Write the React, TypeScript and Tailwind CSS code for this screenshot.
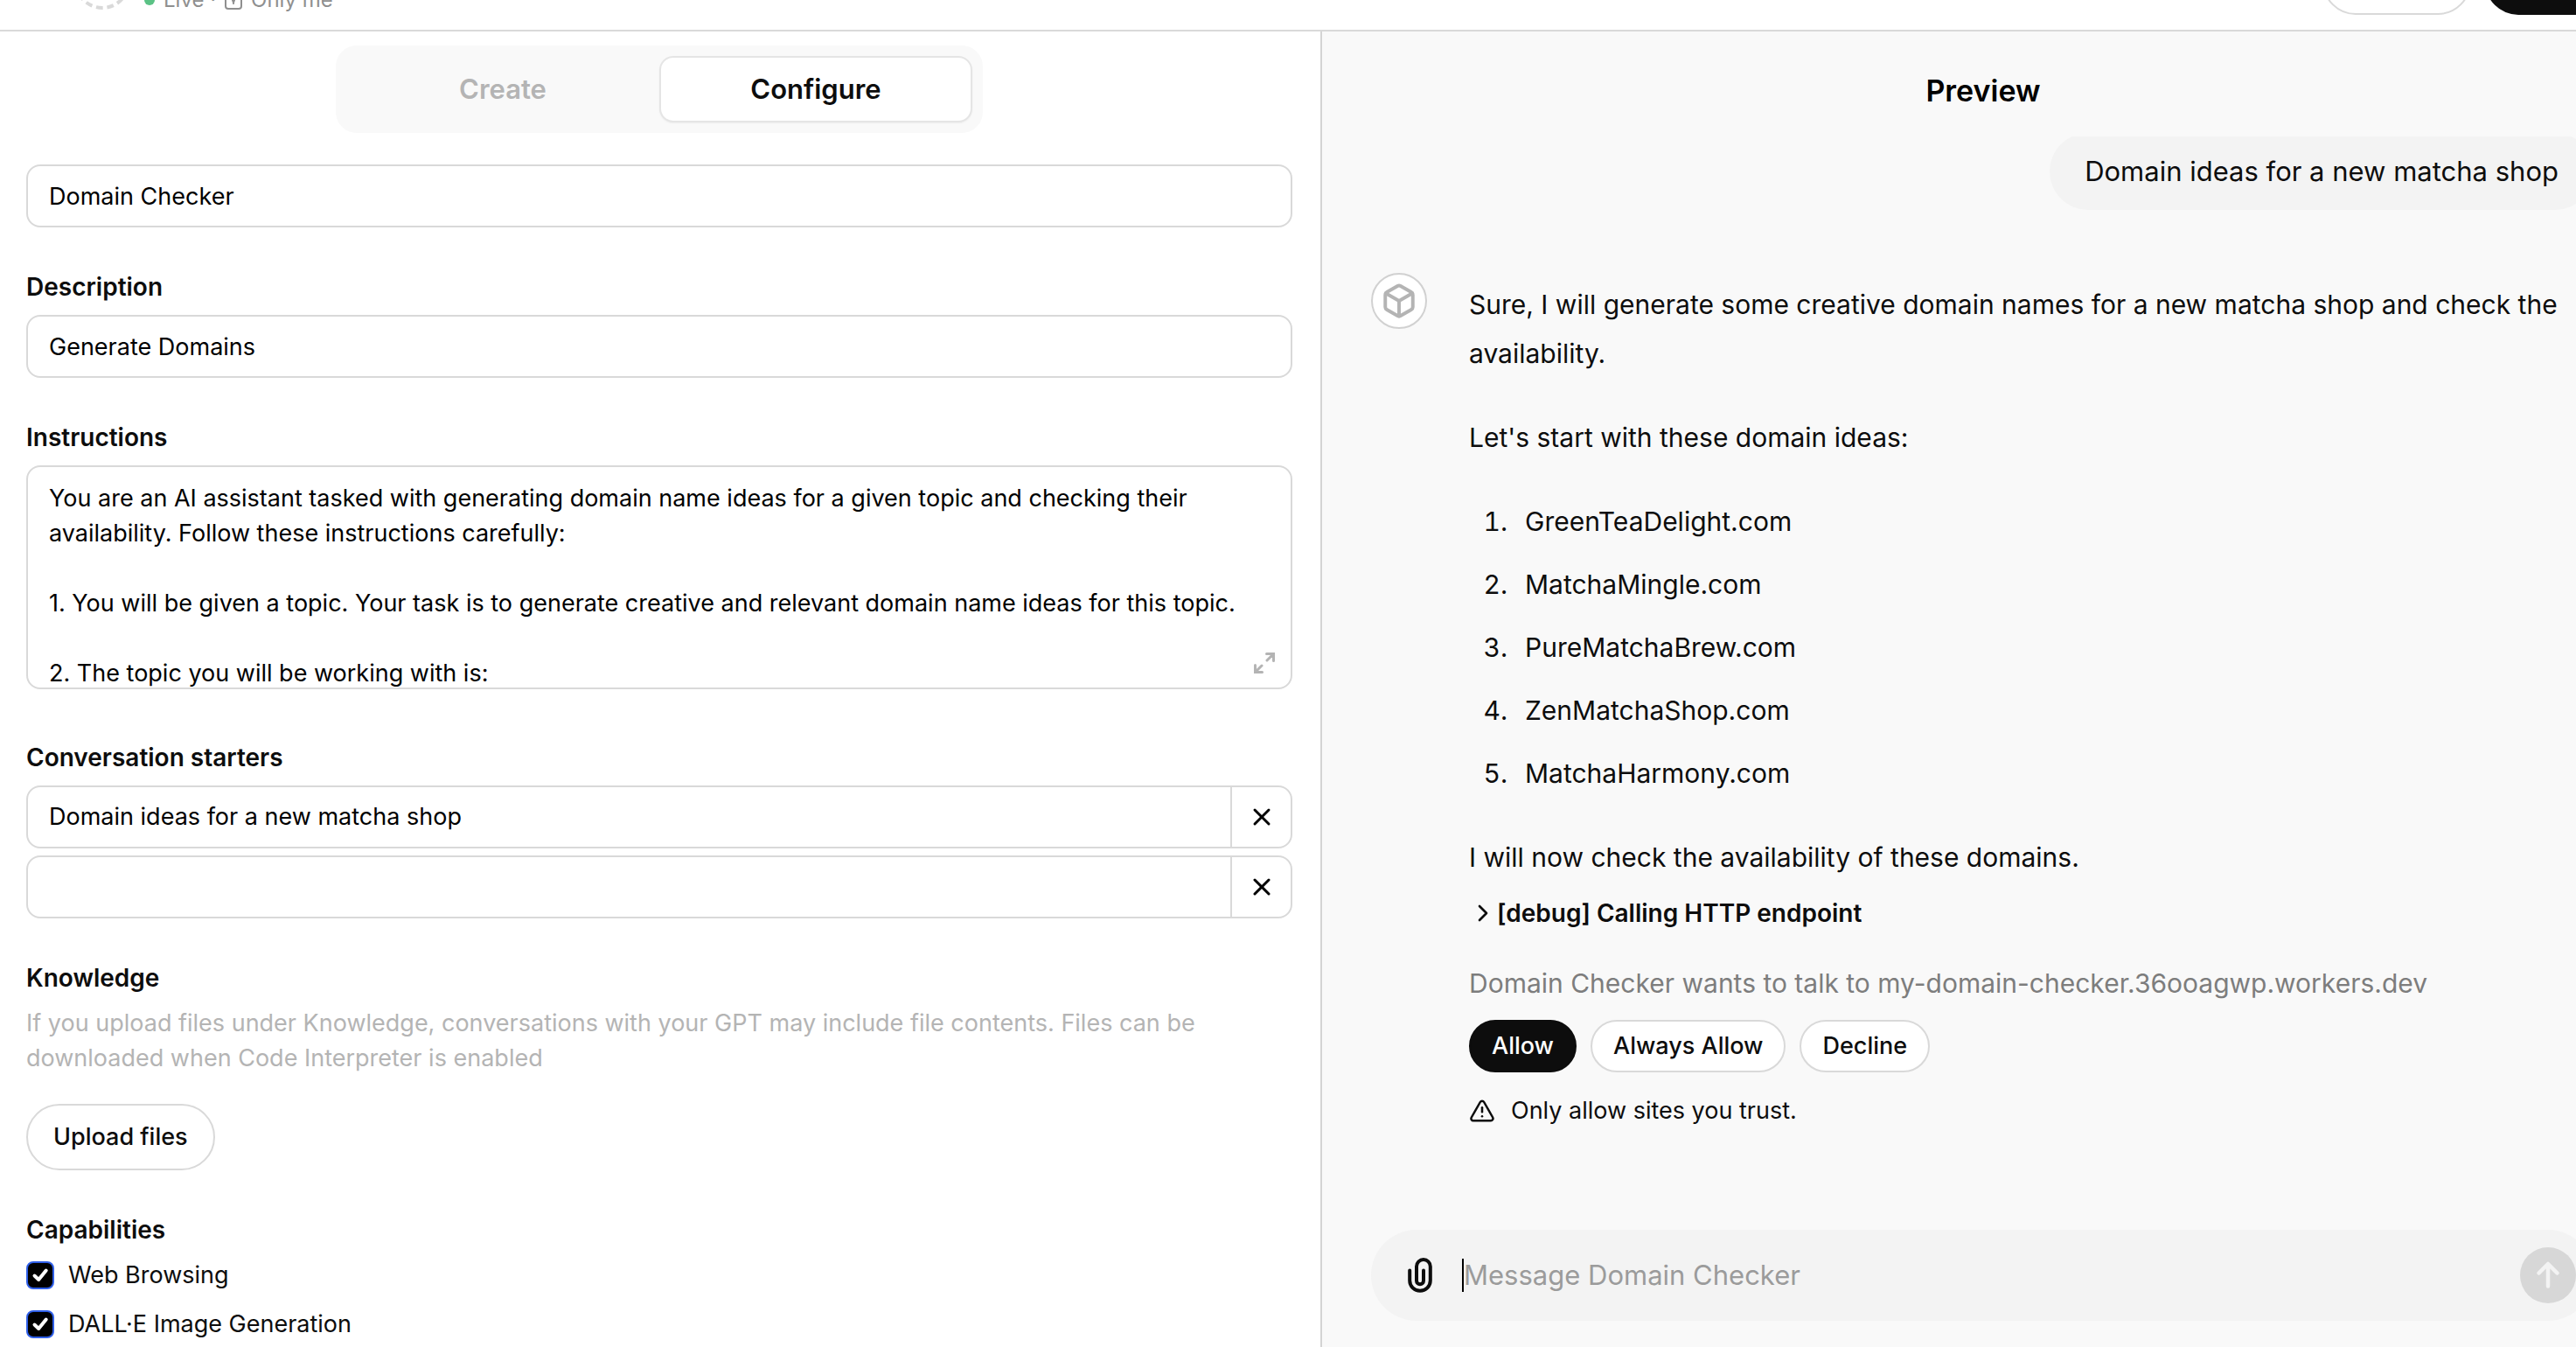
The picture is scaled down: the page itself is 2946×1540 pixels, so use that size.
import { Box, ChevronRight, TriangleAlert, X } from "lucide-react";
import type { ReactNode } from "react";

const instructions = `You are an AI assistant tasked with generating domain name ideas for a given topic and checking their availability. Follow these instructions carefully:

1. You will be given a topic. Your task is to generate creative and relevant domain name ideas for this topic.

2. The topic you will be working with is:`;

const domains = [
  "GreenTeaDelight.com",
  "MatchaMingle.com",
  "PureMatchaBrew.com",
  "ZenMatchaShop.com",
  "MatchaHarmony.com",
];

const starters = ["Domain ideas for a new matcha shop", ""];
const capabilities = ["Web Browsing", "DALL·E Image Generation"];

function LockIcon() {
  return (
    <svg width="20" height="28" viewBox="0 0 20 28" fill="none" stroke="currentColor" strokeWidth="2">
      <path d="M5 8V6a5 5 0 0 1 10 0v2" />
      <rect x="1" y="8" width="18" height="16" rx="3" />
      <path d="M10 19l-1.5-5h3z" fill="currentColor" strokeWidth="1" strokeLinejoin="round" />
    </svg>
  );
}

function ExpandIcon() {
  return (
    <svg width="24" height="24" viewBox="0 0 24 24" fill="none" stroke="currentColor" strokeWidth="3" strokeLinecap="round">
      <path d="M14.5 1.5h8v8M22 2l-7 7" />
      <path d="M9.5 22.5h-8v-8M2 22l7-7" />
    </svg>
  );
}

function PaperclipIcon() {
  return (
    <svg width="28" height="40" viewBox="0 0 28 40" fill="none" stroke="currentColor" strokeWidth="4" strokeLinecap="round">
      <path d="M2.2 14.5V26a11.8 11.8 0 0 0 23.6 0V10a7.9 7.9 0 0 0-15.8 0v16.300a4 4 0 0 0 8 0V14.5" />
    </svg>
  );
}

function SendIcon() {
  return (
    <svg width="64" height="64" viewBox="0 0 64 64" fill="none" stroke="currentColor" strokeWidth="4.5" strokeLinecap="round" strokeLinejoin="round">
      <path d="M21.500 29.500L32 19l10.500 10.500M32 20v24.500" />
    </svg>
  );
}

function Label({ htmlFor, children }: { htmlFor: string; children: ReactNode }) {
  return (
    <label htmlFor={htmlFor} className="block text-[28px] leading-10 font-semibold">
      {children}
    </label>
  );
}

function Field({ id, value }: { id: string; value: string }) {
  return (
    <input
      id={id}
      aria-label={id}
      defaultValue={value}
      className="block h-[72px] w-full rounded-2xl border-2 border-[#d9d9d9] bg-white px-6 text-[27px] leading-10 text-black outline-none"
    />
  );
}

function Header() {
  return (
    <header className="flex h-9 shrink-0 items-end justify-between border-b-2 border-[#d9d9d9] bg-white pr-8 pl-[85px]">
      <div className="flex items-end gap-4">
        <svg className="mb-[23px]" width="64" height="64" viewBox="0 0 64 64" fill="none">
          <circle cx="32" cy="32" r="30" stroke="#d9d9d9" strokeWidth="4" strokeDasharray="7.800 4.766" strokeDashoffset="3.900" />
        </svg>
        <div className="mb-[18px] flex items-center gap-2.5 text-2xl leading-8 text-[#8f8f8f]">
          <span className="size-3 rounded-full bg-[#5bc285]" />
          <span>Live ·</span>
          <LockIcon />
          <span>Only me</span>
        </div>
      </div>
      <div className="mb-[17px] flex gap-4">
        <button aria-label="Share" className="h-[76px] w-[170px] rounded-full border-2 border-[#d9d9d9] bg-white" />
        <button aria-label="Update" className="h-[76px] w-[150px] rounded-full bg-[#0d0d0d]" />
      </div>
    </header>
  );
}

function ConfigurePanel() {
  return (
    <section className="overflow-hidden border-r-2 border-[#d4d4d4] bg-white pr-8 pl-[30px]">
      <div className="mx-auto mt-4 flex w-[740px] rounded-3xl bg-[#f9f9f9] p-3 text-[31px] leading-10 font-semibold">
        <button className="h-[76px] w-1/2 rounded-2xl text-[#b4b4b4]">Create</button>
        <button className="h-[76px] w-1/2 rounded-2xl border-2 border-[#e5e5e5] bg-white text-[#0d0d0d] shadow-xs">Configure</button>
      </div>

      <form className="mt-9 flex flex-col gap-12">
        <Field id="Name" value="Domain Checker" />

        <div className="flex flex-col gap-3">
          <Label htmlFor="Description">Description</Label>
          <Field id="Description" value="Generate Domains" />
        </div>

        <div className="flex flex-col gap-3 pb-[10px]">
          <Label htmlFor="Instructions">Instructions</Label>
          <div className="relative">
            <textarea
              id="Instructions"
              defaultValue={instructions}
              className="block h-64 w-full resize-none overflow-hidden rounded-2xl border-2 border-[#d9d9d9] px-6 pt-4 text-[27px] leading-10 text-black outline-none"
            />
            <button type="button" aria-label="Expand" className="absolute right-5 bottom-[18px] text-[#b4b4b4]">
              <ExpandIcon />
            </button>
          </div>
        </div>

        <div className="flex flex-col gap-3">
          <Label htmlFor="starter-0">Conversation starters</Label>
          <div className="flex flex-col gap-2">
            {starters.map((text, i) => (
              <div key={i} className="flex h-[72px] overflow-hidden rounded-2xl border-2 border-[#d9d9d9] bg-white">
                <input
                  id={`starter-${i}`}
                  aria-label={`Conversation starter ${i + 1}`}
                  defaultValue={text}
                  className="min-w-0 flex-1 px-6 text-[27px] leading-10 text-black outline-none"
                />
                <button type="button" aria-label="Remove" className="flex w-[69px] items-center justify-center border-l-2 border-[#d9d9d9] text-black">
                  <X size={32} strokeWidth={2.25} />
                </button>
              </div>
            ))}
          </div>
        </div>

        <div>
          <Label htmlFor="upload">Knowledge</Label>
          <p className="mt-3 text-[27px] leading-10 text-[#b4b4b4]">
            If you upload files under Knowledge, conversations with your GPT may include file contents. Files can be downloaded when Code Interpreter is enabled
          </p>
          <button id="upload" type="button" className="mt-8 h-[76px] rounded-full border-2 border-[#d9d9d9] px-[29px] text-[27px] leading-10 font-medium">
            Upload files
          </button>
        </div>

        <fieldset>
          <legend className="text-[28px] leading-10 font-semibold">Capabilities</legend>
          <div className="mt-3 flex flex-col gap-4">
            {capabilities.map((name) => (
              <label key={name} className="flex items-center gap-4 text-[27px] leading-10">
                <span className="grid size-8">
                  <input
                    type="checkbox"
                    defaultChecked
                    className="col-start-1 row-start-1 size-8 appearance-none rounded-lg border-2 border-[#2f5fe8] bg-black"
                  />
                  <svg className="pointer-events-none col-start-1 row-start-1" width="32" height="32" viewBox="0 0 32 32" fill="none" stroke="white" strokeWidth="4" strokeLinecap="round" strokeLinejoin="round">
                    <path d="M9.500 16.500l4.700 4.500 8.500-10.500" />
                  </svg>
                </span>
                {name}
              </label>
            ))}
          </div>
        </fieldset>
      </form>
    </section>
  );
}

function PreviewPanel() {
  return (
    <section className="flex min-h-0 flex-col bg-[#f9f9f9]">
      <h2 className="pt-11 pb-7 text-center text-[34px] leading-[48px] font-semibold text-black">Preview</h2>

      <div className="flex min-h-0 flex-1 flex-col justify-end overflow-hidden pr-[58px] pb-[116px] pl-14">
        <div className="shrink-0">
          <div className="flex justify-end">
            <p className="rounded-[44px] bg-[#f3f3f3] px-10 py-5 text-[31px] leading-[48px]">Domain ideas for a new matcha shop</p>
          </div>

          <div className="mt-[72px] flex gap-12">
            <div className="flex size-16 shrink-0 items-center justify-center rounded-full border-2 border-[#d1d1d1] bg-white text-[#b4b4b4]">
              <Box size={42} strokeWidth={2.25} />
            </div>
            <div className="min-w-0 flex-1 pt-2 text-[30px] leading-[56px]">
              <p>
                Sure, I will generate some creative domain names for a new matcha shop and check the
                <br />
                availability.
              </p>
              <p className="mt-10">Let's start with these domain ideas:</p>
              <ol className="mt-10 flex list-decimal flex-col gap-4 pl-[52px]">
                {domains.map((d) => (
                  <li key={d} className="pl-3">{d}</li>
                ))}
              </ol>
              <p className="mt-10">I will now check the availability of these domains.</p>

              <button className="mt-4 flex items-center text-[28px] leading-10 font-semibold">
                <ChevronRight size={32} strokeWidth={2} />
                [debug] Calling HTTP endpoint
              </button>

              <p className="mt-8 text-[#7d7d7d]">Domain Checker wants to talk to my-domain-checker.36ooagwp.workers.dev</p>
              <div className="mt-[14px] flex gap-4 text-[27px] leading-10 font-medium">
                <button className="h-[60px] rounded-full border-2 border-[#0d0d0d] bg-[#0d0d0d] px-6 text-white">Allow</button>
                <button className="h-[60px] rounded-full border-2 border-[#d9d9d9] bg-white px-6">Always Allow</button>
                <button className="h-[60px] rounded-full border-2 border-[#d9d9d9] bg-white px-6">Decline</button>
              </div>
              <p className="mt-6 flex items-center gap-[18px] text-[27px] leading-10">
                <TriangleAlert size={30} strokeWidth={2} />
                Only allow sites you trust.
              </p>
            </div>
          </div>
        </div>
      </div>

      <form className="mr-[58px] mb-[30px] ml-14 flex h-[104px] shrink-0 items-center rounded-full bg-[#f3f3f3] pr-5 pl-[42px]">
        <button type="button" aria-label="Attach file">
          <PaperclipIcon />
        </button>
        <span className="ml-[34px] h-[38px] w-[2px] bg-black" />
        <input
          aria-label="Message"
          placeholder="Message Domain Checker"
          className="min-w-0 flex-1 bg-transparent text-[31px] leading-[48px] outline-none placeholder:text-[#9b9b9b]"
        />
        <button type="button" aria-label="Send" className="size-16 rounded-full bg-[#d7d7d7] text-[#f3f3f3]">
          <SendIcon />
        </button>
      </form>
    </section>
  );
}

export default function App() {
  return (
    <div className="h-screen overflow-hidden bg-white font-[Inter,sans-serif] text-[#0d0d0d]">
      <div className="-mr-[78px] flex h-full flex-col">
        <Header />
        <main className="grid min-h-0 flex-1 grid-cols-2">
          <ConfigurePanel />
          <PreviewPanel />
        </main>
      </div>
    </div>
  );
}
